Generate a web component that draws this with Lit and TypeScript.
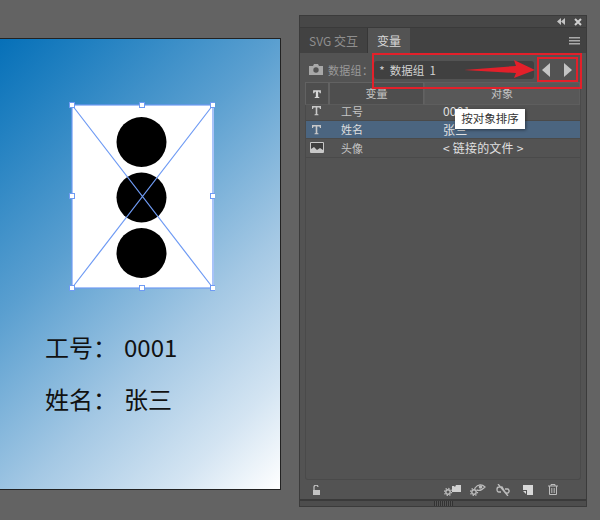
import { LitElement, html, css, svg } from "lit";
import { customElement } from "lit/decorators.js";

const T = svg`<path d="M2 2h9v3h-1l-.6-1.6H7.3V10l1.2.6v.6h-4v-.6l1.2-.6V3.4H3.6L3 5H2z" fill="#c8c8c8"/>`;
const TB = svg`<path d="M1.500 1.500h10v4h-1.500l-.6-2H8V10l1.500.6v1h-6v-1L5 10V3.500H3.600l-.6 2H1.500z" fill="#d8d8d8"/>`;
const gear = svg`<circle r="2.200" fill="none" stroke="#bdbdbd" stroke-width="1.400"/><circle r="3.600" fill="none" stroke="#bdbdbd" stroke-width="1.200" stroke-dasharray="1.300 1.500"/>`;

@customElement("app-root")
export class AppRoot extends LitElement {
  static styles = css`
    :host { display: block; width: 600px; height: 520px; overflow: hidden; position: relative; background: #636363;
      font-family: "Noto Sans CJK SC", "Liberation Sans", sans-serif; }
    .page { display: flex; align-items: flex-start; height: 520px; }
    .left { width: 299px; flex: none; padding-top: 38px; box-sizing: border-box; }
    .board { position: relative; width: 281px; height: 452px; box-sizing: border-box; border: 1px solid #222; border-left: none;
      background: linear-gradient(135deg, #0670b8 0%, #1f7fc0 12%, #5a9fd0 38%, #a4c8e4 65%, #d3e4f2 85%, #fff 100%); }
    .pic { position: absolute; left: 69px; top: 63px; display: block; }
    .cap { position: absolute; left: 45px; display: flex; gap: 7px; font-size: 24px; line-height: 32px; color: #111; white-space: pre; }
    .c1 { top: 292px; }
    .c2 { top: 344px; }
    .panel { width: 288px; height: 492px; margin-top: 15px; flex: none; box-sizing: border-box; background: #535353;
      border: 1px solid #3b3b3b; display: flex; flex-direction: column; color: #c8c8c8; font-size: 12px; }
    .title { height: 11px; flex: none; background: #474747; display: flex; align-items: center; justify-content: flex-end; gap: 9px; padding-right: 4px; border-bottom: 1px solid #3a3a3a; }
    .title svg { display: block; }
    .tabs { height: 25px; flex: none; background: #424242; display: flex; align-items: stretch; }
    .tab { padding: 0 9px; font-size: 12px; line-height: 25px; color: #8f8f8f; border-right: 1px solid #373737; }
    .tab.on { background: #535353; color: #d8d8d8; padding: 0 9px; border: none; }
    .menu { margin-left: auto; align-self: center; margin-right: 6px; display: block; }
    .group { height: 29px; flex: none; display: flex; align-items: center; padding: 4px 0 0 9px; box-sizing: border-box; position: relative; }
    .lbl { margin-left: 5px; color: #9a9a9a; font-size: 11px; letter-spacing: .3px; }
    .drop { margin-left: 1px; width: 160px; height: 18px; box-sizing: border-box; background: #404040; border-radius: 3px; color: #d2d2d2; font-size: 11.5px; line-height: 18px; padding-left: 5px; white-space: pre; }
    .nav { margin-left: 8px; display: flex; gap: 14px; }
    .nav svg { display: block; }
    .table { margin: 0 5px 0 5px; flex: 1; border: 1px solid #4a4a4a; border-top: none; border-radius: 0 0 3px 3px; display: flex; flex-direction: column; box-sizing: border-box; }
    .head { height: 20px; flex: none; display: grid; grid-template-columns: 24px 95px 1fr; font-size: 11px; color: #c4c4c4; text-align: center; line-height: 21px; margin-left: -1px; }
    .head div { box-sizing: border-box; background: #4e4e4e; border: 1px solid #626262; border-bottom-color: #5a5a5a; display: flex; align-items: center; justify-content: center; }
    .head div.sort { background: #585858; border-color: #5e5e5e; }
    .head svg { display: block; }
    .row { height: 18.5px; flex: none; display: grid; grid-template-columns: 35px 102px 1fr; align-items: center; font-size: 11px; color: #c4c4c4; border-bottom: 1px solid #4a4a4a; box-sizing: border-box; }
    .row.sel { background: #4b6580; color: #dfdfdf; }
    .row svg { display: block; margin-left: 4px; }
    .val { font-size: 12px; color: #e0e0e0; white-space: pre; letter-spacing: .2px; }
    .tools { height: 19px; flex: none; display: flex; align-items: center; padding: 0 0 0 12px; }
    .tools svg { display: block; }
    .right { margin-left: auto; display: flex; padding-right: 28px; align-items: center; }
    .right svg:nth-child(2) { margin-left: 9px; }
    .right svg:nth-child(3) { margin-left: 10px; }
    .right svg:nth-child(4) { margin-left: 13px; }
    .right svg:nth-child(5) { margin-left: 15px; }
    .grip { height: 7px; flex: none; border-top: 2px solid #3a3a3a; box-sizing: border-box; background: #4d4d4d; display: flex; justify-content: center; }
    .grip span { width: 19px; height: 5px; background: repeating-linear-gradient(90deg, #333 0 1px, #555 1px 2px); }
    .mark { position: absolute; box-sizing: border-box; border: 2px solid #e3202a; }
    .m1 { left: 372px; top: 53px; width: 210px; height: 36px; }
    .m2 { left: 537px; top: 57px; width: 41px; height: 25px; }
    .arrow { position: absolute; left: 464px; top: 58px; display: block; }
    .tip { position: absolute; left: 455px; top: 109px; width: 70px; height: 20px; box-sizing: border-box; background: #fff; color: #333; font-size: 11.5px; line-height: 19px; text-align: center; box-shadow: 1px 1px 3px rgba(0,0,0,.45); white-space: nowrap; }
  `;

  render() {
    return html`
      <div class="page">
        <div class="left">
          <div class="board">
            <svg class="pic" width="146" height="190" viewBox="-3 -3 146 190">
              <rect x="0" y="0" width="142" height="183" fill="#fff"/>
              <g fill="#000"><circle cx="69.500" cy="37" r="25"/><circle cx="69.500" cy="92.500" r="25"/><circle cx="69.500" cy="148" r="25"/></g>
              <g fill="none" stroke="#6f9bf4" stroke-width="1.200">
                <rect x="0" y="0" width="141" height="183"/>
                <path d="M0 0 141 183M141 0 0 183"/>
              </g>
              <g fill="#fff" stroke="#6f9bf4">
                ${[[0,0],[70,0],[141,0],[0,91],[141,91],[0,183],[70,183],[141,183]].map(([x,y]) => svg`<rect x=${x-2.5} y=${y-2.5} width="5" height="5"/>`)}
              </g>
            </svg>
            <div class="cap c1"><span>工号：</span><span>0001</span></div>
            <div class="cap c2"><span>姓名：</span><span>张三</span></div>
          </div>
        </div>
        <div class="panel">
          <div class="title">
            <svg width="8" height="7" viewBox="0 0 8 7" fill="#c4c4c4"><path d="M4 0v7L0 3.500zM8 0v7L4 3.500z"/></svg>
            <svg width="8" height="8" viewBox="0 0 8 8" stroke="#d0d0d0" stroke-width="2"><path d="M1 1l6 6M7 1 1 7"/></svg>
          </div>
          <div class="tabs">
            <div class="tab">SVG 交互</div>
            <div class="tab on">变量</div>
            <svg class="menu" width="11" height="8" viewBox="0 0 11 8" fill="#aaa"><path d="M0 0h11v1.500H0zM0 3h11v1.500H0zM0 6h11v1.500H0z"/></svg>
          </div>
          <div class="group">
            <svg width="14" height="11" viewBox="0 0 14 11"><path d="M0 2h4l1-2h4l1 2h4v9H0z" fill="#a8a8a8"/><circle cx="7" cy="6" r="2.700" fill="#535353"/></svg>
            <span class="lbl">数据组：</span>
            <div class="drop">*  数据组  1</div>
            <div class="nav">
              <svg width="8" height="14" viewBox="0 0 8 14" fill="#c4c4c4"><path d="M8 0v14L0 7z"/></svg>
              <svg width="8" height="14" viewBox="0 0 8 14" fill="#c4c4c4"><path d="M0 0v14l8-7z"/></svg>
            </div>
          </div>
          <div class="table">
            <div class="head">
              <div><svg width="10" height="10" viewBox="0 0 13 13">${TB}</svg></div>
              <div>变量</div>
              <div class="sort">对象</div>
            </div>
            <div class="row"><svg width="13" height="13" viewBox="0 0 13 13">${T}</svg><span>工号</span><span class="val">0001</span></div>
            <div class="row sel"><svg width="13" height="13" viewBox="0 0 13 13">${T}</svg><span>姓名</span><span class="val">张三</span></div>
            <div class="row"><svg width="14" height="11" viewBox="0 0 14 11"><path d="M.5.5h13v10H.5z" fill="#3f3f3f" stroke="#c8c8c8"/><path d="M1 10V7l3-2 3 3 3-2 3 2v2z" fill="#c8c8c8"/></svg><span>头像</span><span class="val">&lt; 链接的文件 &gt;</span></div>
          </div>
          <div class="tools">
            <svg width="9" height="10" viewBox="0 0 9 10" fill="#c4c4c4"><path d="M1 5h7v5H1z"/><path d="M2 5V2.500a2 2 0 0 1 4-.500" fill="none" stroke="#c4c4c4" stroke-width="1.200"/></svg>
            <div class="right">
              <svg width="17" height="12" viewBox="0 0 17 12"><g transform="translate(4 8)">${gear}</g><path d="M8 2h2l1 1 1-2h5v7H8z" fill="#d0d0d0"/></svg>
              <svg width="16" height="12" viewBox="0 0 16 12"><g transform="translate(4 8)">${gear}</g><path d="M5 4c3-4 7-4 10-1-3 3-6 4-8 3" fill="none" stroke="#bdbdbd" stroke-width="1.200"/><circle cx="10.500" cy="3" r="1.800" fill="#bdbdbd"/></svg>
              <svg width="14" height="12" viewBox="0 0 14 12" fill="none" stroke="#bdbdbd" stroke-width="1.300"><path d="M3 3h3l3 5q2 2 3.500.5t-.5-3.500H9M5 8H3Q1 8 1 5.500T3 3M2 0l10 12"/></svg>
              <svg width="10" height="10" viewBox="0 0 10 10"><path d="M0 0h10v10H4V5H0z" fill="#d8d8d8"/><path d="M0 6h3v3z" fill="#d8d8d8"/></svg>
              <svg width="10" height="11" viewBox="0 0 10 11" fill="none" stroke="#bdbdbd"><path d="M0 2h10M3 2V.5h4V2M1.500 2v8.500h7V2M3.800 4v5M6.200 4v5"/></svg>
            </div>
          </div>
          <div class="grip"><span></span></div>
        </div>
      </div>
      <div class="mark m1"></div>
      <div class="mark m2"></div>
      <svg class="arrow" width="72" height="26" viewBox="0 0 72 26"><path d="M0 12 52 8 50 2 71 12 50 20 52 15z" fill="#e3202a"/></svg>
      <div class="tip">按对象排序</div>
    `;
  }
}
